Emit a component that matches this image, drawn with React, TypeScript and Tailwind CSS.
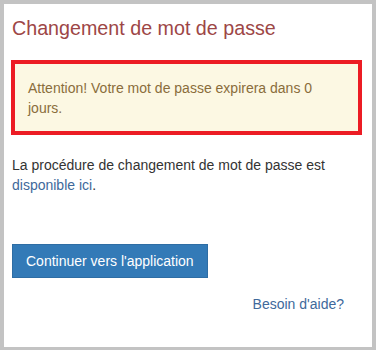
export default function App() {
  return (
    <div className="w-[376px] h-[350px] bg-[#c3c3c3] pt-[4px] px-[4px] pb-[3px] font-['Liberation_Sans',Arial,sans-serif]">
      <div className="h-full bg-white pl-[8px] pr-[10px] pt-[13px]">
        <h3 className="text-[19.7px] leading-[22px] text-[#9d4646]">
          Changement de mot de passe
        </h3>

        <div className="mt-[21px] ml-[-1px] border-4 border-[#ec1c24] bg-[#fcf8e3] pl-[13px] pr-[12px] pt-[14px] pb-[13px]">
          <p className="text-[14px] leading-[20px] text-[#8a6d3b]">
            Attention! Votre mot de passe expirera dans 0 jours.
          </p>
        </div>

        <p className="mt-[20px] text-[14px] leading-[20px] text-[#333333]">
          La procédure de changement de mot de passe est{' '}
          <a href="#" className="text-[#40699b]">
            disponible ici
          </a>
          .
        </p>

        <div className="mt-[49px]">
          <button
            type="button"
            className="h-[34px] px-[13px] bg-[#337ab7] border border-[#2e6da4] text-white text-[14px] leading-[20px]"
          >
            Continuer vers l'application
          </button>
        </div>

        <div className="mt-[16px] flex justify-end pr-[18px]">
          <a href="#" className="text-[14px] leading-[20px] text-[#40699b]">
            Besoin d'aide?
          </a>
        </div>
      </div>
    </div>
  )
}
